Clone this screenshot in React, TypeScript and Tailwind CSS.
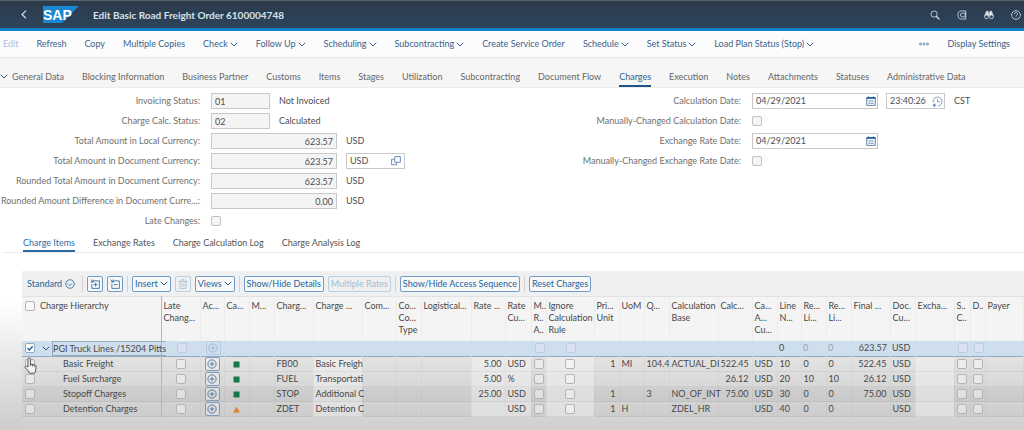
import React, { ReactNode } from "react";

const actions = [
    { label: "Refresh" },
    { label: "Copy" },
    { label: "Multiple Copies" },
    { label: "Check", menu: true },
    { label: "Follow Up", menu: true },
    { label: "Scheduling", menu: true },
    { label: "Subcontracting", menu: true },
    { label: "Create Service Order" },
    { label: "Schedule", menu: true },
    { label: "Set Status", menu: true },
    { label: "Load Plan Status (Stop)", menu: true },
];

const sections = [
    "General Data",
    "Blocking Information",
    "Business Partner",
    "Customs",
    "Items",
    "Stages",
    "Utilization",
    "Subcontracting",
    "Document Flow",
    "Charges",
    "Execution",
    "Notes",
    "Attachments",
    "Statuses",
    "Administrative Data",
];

const amounts = [
    { id: "local", label: "Total Amount in Local Currency:", value: "623.57" },
    { id: "doc", label: "Total Amount in Document Currency:", value: "623.57", editable: true },
    { id: "rounded", label: "Rounded Total Amount in Document Currency:", value: "623.57" },
    { id: "diff", label: "Rounded Amount Difference in Document Curre...:", value: "0.00" },
];

type Kind = "text" | "num" | "check" | "add" | "state";

type Column = {
    key: string;
    head: string[];
    width: string;
    kind?: Kind;
    edit?: boolean;
};

const columns: Column[] = [
    { key: "late", head: ["Late", "Chang..."], width: "w-[39px]", kind: "check" },
    { key: "action", head: ["Ac..."], width: "w-[24px]", kind: "add" },
    { key: "state", head: ["Ca..."], width: "w-[25px]", kind: "state" },
    { key: "m", head: ["M..."], width: "w-[25px]" },
    { key: "type", head: ["Charg..."], width: "w-[39px]" },
    { key: "desc", head: ["Charge ..."], width: "w-[49px]", edit: true },
    { key: "com", head: ["Com..."], width: "w-[34px]" },
    { key: "coType", head: ["Co...", "Co...", "Type"], width: "w-[25px]" },
    { key: "logistical", head: ["Logistical..."], width: "w-[50px]" },
    { key: "rate", head: ["Rate ..."], width: "w-[34px]", kind: "num", edit: true },
    { key: "rateCur", head: ["Rate", "Cu..."], width: "w-[26px]", edit: true },
    { key: "manual", head: ["M..", "R..", "A.."], width: "w-[15px]", kind: "check" },
    { key: "ignore", head: ["Ignore", "Calculation", "Rule"], width: "w-[48px]", kind: "check", edit: true },
    { key: "price", head: ["Pri...", "Unit"], width: "w-[25px]", kind: "num" },
    { key: "uom", head: ["UoM"], width: "w-[25px]" },
    { key: "qty", head: ["Q..."], width: "w-[25px]" },
    { key: "base", head: ["Calculation", "Base"], width: "w-[49px]" },
    { key: "calc", head: ["Calc..."], width: "w-[34px]", kind: "num" },
    { key: "calcCur", head: ["Ca...", "A...", "Cu..."], width: "w-[25px]" },
    { key: "line", head: ["Line", "N..."], width: "w-[24px]" },
    { key: "ref1", head: ["Re...", "Li..."], width: "w-[25px]" },
    { key: "ref2", head: ["Re...", "Li..."], width: "w-[25px]" },
    { key: "final", head: ["Final ..."], width: "w-[39px]", kind: "num" },
    { key: "docCur", head: ["Doc.", "Cu..."], width: "w-[25px]" },
    { key: "exch", head: ["Excha..."], width: "w-[39px]", edit: true },
    { key: "sc", head: ["S..", "C.."], width: "w-[16px]", kind: "check" },
    { key: "d", head: ["D.."], width: "w-[15px]", kind: "check" },
    { key: "payer", head: ["Payer"], width: "" },
];

type Row = { name: string; [key: string]: string };

const rows: Row[] = [
    { name: "Basic Freight", state: "ok", type: "FB00", desc: "Basic Freigh", rate: "5.00", rateCur: "USD", price: "1", uom: "MI", qty: "104.4", base: "ACTUAL_DI", calc: "522.45", calcCur: "USD", line: "10", ref1: "0", ref2: "0", final: "522.45", docCur: "USD" },
    { name: "Fuel Surcharge", state: "ok", type: "FUEL", desc: "Transportati", rate: "5.00", rateCur: "%", calc: "26.12", calcCur: "USD", line: "20", ref1: "10", ref2: "10", final: "26.12", docCur: "USD" },
    { name: "Stopoff Charges", state: "ok", type: "STOP", desc: "Additional C", rate: "25.00", rateCur: "USD", price: "1", qty: "3", base: "NO_OF_INT", calc: "75.00", calcCur: "USD", line: "30", ref1: "0", ref2: "0", final: "75.00", docCur: "USD" },
    { name: "Detention Charges", state: "warn", type: "ZDET", desc: "Detention C", rateCur: "USD", price: "1", uom: "H", base: "ZDEL_HR", calcCur: "USD", line: "40", ref1: "0", ref2: "0", docCur: "USD" },
];

function Icon({ size = "size-[10px]", children }: { size?: string; children: ReactNode }) {
    return (
        <svg className={`${size} shrink-0`} viewBox="0 0 16 16" fill="none" stroke="currentColor" strokeWidth="1.3" aria-hidden="true">
            {children}
        </svg>
    );
}

function Chevron() {
    return (
        <svg className="w-2 h-[5px] shrink-0" viewBox="0 0 8 5" fill="none" stroke="currentColor" aria-hidden="true">
            <path d="M0.7 0.7 4 4 7.3 0.7" />
        </svg>
    );
}

function CalendarIcon() {
    return (
        <Icon>
            <path d="M1.2 2.5h13.6v12.5H1.2z" />
            <path d="M1 3.2h14" strokeWidth="3" />
            <path d="M4 0.5v3M12 0.5v3" strokeWidth="1.5" />
            <path d="M4 8h2M7 8h2M10 8h2M4 11.5h2M7 11.5h2M10 11.5h2" strokeWidth="1.8" />
        </Icon>
    );
}

function Check({ label, id, checked, faint }: { label?: string; id?: string; checked?: boolean; faint?: boolean }) {
    return (
        <span className="relative inline-flex size-[10px] align-middle">
            <input
                id={id}
                type="checkbox"
                aria-label={label}
                defaultChecked={checked}
                className={`appearance-none size-[10px] rounded-[2px] border ${checked ? "border-[#8fa9c4] bg-white" : faint ? "border-[#bfcbe0] bg-[#d8e1f2]" : id ? "border-[#c0c0c0] bg-[#f4f4f4]" : "border-[#b4b4b4] bg-white/40"}`}
            />
            {checked && (
                <svg className="absolute inset-0 size-[10px] text-[#1f5a94] pointer-events-none" viewBox="0 0 10 10" fill="none" stroke="currentColor" strokeWidth="1.4" aria-hidden="true">
                    <path d="M2.5 5.2 4.3 7 7.7 3.2" />
                </svg>
            )}
        </span>
    );
}

function AddButton({ faint }: { faint?: boolean }) {
    return (
        <button
            type="button"
            aria-label="Add"
            className={`flex items-center justify-center w-[15px] h-[14px] rounded-[2px] border ${faint ? "border-[#b4cbe0] text-[#8fb0cf]" : "border-[#7d9dbb] text-[#3c6993] bg-white/30"}`}
        >
            <Icon>
                <circle cx="8" cy="8" r="6.6" />
                <path d="M8 4.5v7M4.5 8h7" />
            </Icon>
        </button>
    );
}

function ToolButton({ children, label, disabled }: { children: ReactNode; label?: string; disabled?: boolean }) {
    return (
        <button
            type="button"
            aria-label={label}
            disabled={disabled}
            className={`flex items-center justify-center gap-[2px] h-4 px-[2px] rounded-[2px] border whitespace-nowrap ${disabled ? "border-[#b9cfe2] text-[#a3bcd3]" : "border-[#6f9cc8] text-[#22639f] bg-white/50"}`}
        >
            {children}
        </button>
    );
}

function Separator() {
    return <span className="w-px h-4 bg-[#d2d2d2]" />;
}

function Header() {
    return (
        <header className="flex items-center h-[31px] border-t border-t-[#59636b] border-b-[3px] border-b-[#0f82c8] bg-linear-to-b from-[#2b3b4b] to-[#2d435b] pl-[20px] pr-[3px] text-[#d9e1e8]">
            <button type="button" aria-label="Back" className="w-[23px]">
                <svg className="w-[8px] h-[9px]" viewBox="0 0 8 9" fill="none" stroke="currentColor" strokeWidth="1.2" aria-hidden="true">
                    <path d="M6 0.6 2 4.5 6 8.4" />
                </svg>
            </button>
            <svg className="w-9 h-[17px]" viewBox="0 0 36 17" role="img" aria-label="SAP">
                <path d="M0 0h36L19 17H0z" fill="#1a86cf" />
                <text x="0" y="14" fontFamily="Liberation Sans, sans-serif" fontSize="14" fontWeight="700" fill="#fff">SAP</text>
            </svg>
            <h1 className="ml-[14px] text-[10px] font-bold whitespace-nowrap">Edit Basic Road Freight Order 6100004748</h1>
            <div className="flex items-center gap-[17px] ml-auto">
                <button type="button" aria-label="Search">
                    <Icon>
                        <circle cx="6.5" cy="6.5" r="5" />
                        <path d="m10 10 5 5" strokeWidth="2.2" />
                    </Icon>
                </button>
                <button type="button" aria-label="Copilot">
                    <Icon>
                        <path d="M14 1.5H7A5.5 6.5 0 0 0 7 14.5H14M14 1.5v13" />
                        <path d="M13 5H8.5a3 3 0 0 0 0 6H13z" />
                    </Icon>
                </button>
                <button type="button" aria-label="Find">
                    <Icon>
                        <path d="M4 2h2.5v3h3V2H12l3 8H9.5V8h-3v2H1z" fill="currentColor" />
                        <circle cx="4" cy="11" r="3" fill="#2d4055" />
                        <circle cx="12" cy="11" r="3" fill="#2d4055" />
                    </Icon>
                </button>
                <button type="button" aria-label="Help">
                    <Icon>
                        <circle cx="8" cy="8" r="7" />
                        <path d="M5.7 6.2a2.3 2.3 0 1 1 3.5 2c-.8.5-1.2.9-1.2 1.7M8 11v1.5" />
                    </Icon>
                </button>
            </div>
        </header>
    );
}

function Form() {
    return (
        <form className="flex pt-[3px] text-[#4d4d4d]">
            <div className="w-[570px]">
                <div className="flex items-center h-5">
                    <label htmlFor="invoicing" className="w-[200px] mr-[11px] text-right text-[#707070]">Invoicing Status:</label>
                    <input id="invoicing" readOnly defaultValue="01" className="w-[59px] h-4 px-[3px] border border-[#c8c8c8] bg-[#f4f4f4]" />
                    <span className="ml-[9px]">Not Invoiced</span>
                </div>
                <div className="flex items-center h-5">
                    <label htmlFor="calcStatus" className="w-[200px] mr-[11px] text-right text-[#707070]">Charge Calc. Status:</label>
                    <input id="calcStatus" readOnly defaultValue="02" className="w-[59px] h-4 px-[3px] border border-[#c8c8c8] bg-[#f4f4f4]" />
                    <span className="ml-[9px]">Calculated</span>
                </div>
                {amounts.map((a) => (
                    <div key={a.id} className="flex items-center h-5">
                        <label htmlFor={a.id} className="w-[200px] mr-[11px] text-right whitespace-nowrap text-[#707070]">{a.label}</label>
                        <input id={a.id} readOnly defaultValue={a.value} className="w-[126px] h-4 px-[3px] border border-[#c8c8c8] bg-[#f4f4f4] text-right" />
                        {a.editable ? (
                            <span className="flex items-center w-[59px] h-4 ml-[9px] px-[3px] border border-[#c8c8c8] bg-white">
                                <input aria-label="Currency" defaultValue="USD" className="w-full min-w-0" />
                                <span className="text-[#4a78a6]">
                                    <Icon>
                                        <path d="M6 1h9v9H6zM6 5H1v9h8v-4" />
                                    </Icon>
                                </span>
                            </span>
                        ) : (
                            <span className="ml-[9px]">USD</span>
                        )}
                    </div>
                ))}
                <div className="flex items-center h-5">
                    <label htmlFor="lateChanges" className="w-[200px] mr-[11px] text-right text-[#707070]">Late Changes:</label>
                    <Check id="lateChanges" />
                </div>
            </div>
            <div className="flex-1">
                <div className="flex items-center h-5">
                    <label htmlFor="calcDate" className="w-[171px] mr-[11px] text-right text-[#707070]">Calculation Date:</label>
                    <span className="flex items-center w-[126px] h-4 pl-[3px] pr-px border border-[#c8c8c8]">
                        <input id="calcDate" defaultValue="04/29/2021" className="w-full min-w-0" />
                        <span className="text-[#2f669c]"><CalendarIcon /></span>
                    </span>
                    <span className="flex items-center w-[59px] h-4 ml-2 pl-[3px] pr-px border border-[#c8c8c8]">
                        <input aria-label="Calculation time" defaultValue="23:40:26" className="w-full min-w-0" />
                        <span className="text-[#6f93bb]">
                            <Icon size="size-[11px]">
                                <path d="M1.7 9.5A6.5 6.5 0 1 1 9 14.5M8 4.5V8.5h3.5" />
                                <path d="M1 13.3h5M3.5 11v5" strokeWidth="2" />
                            </Icon>
                        </span>
                    </span>
                    <span className="ml-[9px]">CST</span>
                </div>
                <div className="flex items-center h-5">
                    <label htmlFor="manualCalc" className="w-[171px] mr-[11px] text-right text-[#707070]">Manually-Changed Calculation Date:</label>
                    <Check id="manualCalc" />
                </div>
                <div className="flex items-center h-5">
                    <label htmlFor="rateDate" className="w-[171px] mr-[11px] text-right text-[#707070]">Exchange Rate Date:</label>
                    <span className="flex items-center w-[126px] h-4 pl-[3px] pr-px border border-[#c8c8c8]">
                        <input id="rateDate" defaultValue="04/29/2021" className="w-full min-w-0" />
                        <span className="text-[#2f669c]"><CalendarIcon /></span>
                    </span>
                </div>
                <div className="flex items-center h-5">
                    <label htmlFor="manualRate" className="w-[171px] mr-[11px] text-right text-[#707070]">Manually-Changed Exchange Rate Date:</label>
                    <Check id="manualRate" />
                </div>
            </div>
        </form>
    );
}

function Cell({ column, row }: { column: Column; row: Row }) {
    const value = row[column.key];
    const fill = column.edit ? "bg-white/35" : "";
    if (column.kind === "check") {
        return <td className={`${fill} border-r border-black/3`}><div className="flex justify-center"><Check label={column.head.join(" ")} /></div></td>;
    }
    if (column.kind === "add") {
        return <td className="border-r border-black/3"><div className="flex justify-center"><AddButton /></div></td>;
    }
    if (column.kind === "state") {
        return (
            <td className="border-r border-black/3">
                <svg className="size-[7px] mx-auto" viewBox="0 0 7 7" aria-hidden="true">
                    {value === "ok" ? <path d="M0.5 0.5h6v6h-6z" fill="#16774a" /> : <path d="M3.5 0.5 6.8 6.5H0.2z" fill="#d9822b" />}
                </svg>
            </td>
        );
    }
    return (
        <td className={`${fill} pl-[2px] whitespace-nowrap border-r border-black/3 ${column.kind === "num" ? "pr-[3px] text-right" : ""}`}>{value}</td>
    );
}

function ChargeTable() {
    return (
        <table className="table-fixed w-full border-collapse text-[#484848]">
            <colgroup>
                <col className="w-[15px]" />
                <col className="w-[124px]" />
                {columns.map((c) => <col key={c.key} className={c.width} />)}
            </colgroup>
            <thead>
                <tr className="h-[44px] border-t border-[#e2e2e2] bg-white/30 align-top text-left leading-3">
                    <th className="pt-[4px] pl-[3px]"><div className="flex"><Check label="Select all" /></div></th>
                    <th className="pt-[3px] pl-[3px] font-normal border-r border-[#b5b5b5]">Charge Hierarchy</th>
                    {columns.map((c) => (
                        <th key={c.key} className="pt-[3px] pl-[2px] font-normal whitespace-nowrap border-r border-black/3">
                            {c.head.map((line, i) => <div key={i}>{line}</div>)}
                        </th>
                    ))}
                </tr>
            </thead>
            <tbody>
                <tr className="h-4 bg-[#cfdeed] border-b border-[#8fabc7]">
                    <td className="pl-[3px]">
                        <div className="relative flex">
                            <Check label="Select PGI Truck Lines" checked />
                            <svg className="absolute top-[14px] -left-[1px] z-10 w-[13px] h-[17px] pointer-events-none" viewBox="0 0 13 17" fill="#f4f4f4" stroke="#555" strokeWidth="1" strokeLinejoin="round" aria-hidden="true">
                                <path d="M4 10V2.2a1.2 1.2 0 0 1 2.4 0V7l4 .8c1.3.3 1.8 1 1.7 2.2L11.5 14l-.8 2.2H5.5L4.5 14 1 10.5c-.6-.9.6-1.7 1.4-1.2z" />
                                <path d="M6.4 7v2M8.4 7.6v1.8M10.4 8v1.6" fill="none" />
                            </svg>
                        </div>
                    </td>
                    <td className="border-r border-[#b5b5b5]">
                        <div className="flex items-center gap-[2px] pl-[5px] whitespace-nowrap">
                            <span className="text-[#27598a]"><Chevron /></span>
                            <span className="flex-1 leading-[13px] border border-r-0 border-[#9aa9b8]">PGI Truck Lines /15204 Pitts</span>
                        </div>
                    </td>
                    {columns.map((c) => (
                        <td key={c.key} className={`pl-[2px] ${c.kind === "num" ? "pr-[3px] text-right" : ""}`}>
                            {c.kind === "check" && <div className="flex justify-center"><Check label={c.head.join(" ")} faint /></div>}
                            {c.kind === "add" && <div className="flex justify-center"><AddButton faint /></div>}
                            {c.key === "line" && "0"}
                            {(c.key === "ref1" || c.key === "ref2") && <span className="text-[#93a3b5]">0</span>}
                            {c.key === "final" && "623.57"}
                            {c.key === "docCur" && "USD"}
                        </td>
                    ))}
                </tr>
                {rows.map((row) => (
                    <tr key={row.name} className={`h-[15px] border-b border-black/5 ${row.type === "STOP" ? "bg-black/7" : "bg-black/3"}`}>
                        <td className="pl-[3px]"><div className="flex"><Check label={`Select ${row.name}`} /></div></td>
                        <td className="pl-[26px] whitespace-nowrap border-r border-[#b5b5b5]">{row.name}</td>
                        {columns.map((c) => <Cell key={c.key} column={c} row={row} />)}
                    </tr>
                ))}
            </tbody>
        </table>
    );
}

export default function App() {
    return (
        <div className="flex flex-col min-h-screen overflow-hidden bg-linear-to-b from-white from-70% to-[#cdcdcd] font-[Lato,sans-serif] text-[9px] leading-3">
            <Header />
            <nav className="flex items-center gap-[18px] h-[27px] pl-[3px] pr-[14px] bg-[#fcfcfc] border-b border-[#e6e6e6] text-[#38628f] whitespace-nowrap">
                <button type="button" disabled className="text-[#adbfd4]">Edit</button>
                {actions.map((a) => (
                    <button key={a.label} type="button" className="flex items-center gap-[2px]">
                        {a.label}
                        {a.menu && <Chevron />}
                    </button>
                ))}
                <button type="button" aria-label="More" className="ml-auto">
                    <svg className="w-[10px] h-[4px]" viewBox="0 0 10 4" fill="none" stroke="currentColor" strokeWidth="0.7" aria-hidden="true">
                        <circle cx="1.5" cy="2" r="1" />
                        <circle cx="5" cy="2" r="1" />
                        <circle cx="8.5" cy="2" r="1" />
                    </svg>
                </button>
                <button type="button">Display Settings</button>
            </nav>
            <nav className="flex items-end h-[30px] bg-[#f6f6f6] border-b border-[#ececec] text-[#666] whitespace-nowrap">
                <span className="pb-2 mr-1 text-[#27598a]"><Chevron /></span>
                <div className="flex gap-[18px]">
                    {sections.map((s) => (
                        <a key={s} href="#" className={s === "Charges" ? "pb-[2px] border-b-2 border-[#20558a] text-[#2b5f94]" : "pb-[2px] border-b-2 border-transparent"}>{s}</a>
                    ))}
                </div>
            </nav>
            <Form />
            <nav className="flex items-end gap-[18px] h-[22px] ml-[3px] pl-5 border-b border-[#ececec] text-[#555] whitespace-nowrap">
                <a href="#" className="pb-px border-b-2 border-[#2d6ca8] text-[#2d6ca8]">Charge Items</a>
                <a href="#" className="pb-px border-b-2 border-transparent">Exchange Rates</a>
                <a href="#" className="pb-px border-b-2 border-transparent">Charge Calculation Log</a>
                <a href="#" className="pb-px border-b-2 border-transparent">Charge Analysis Log</a>
            </nav>
            <section className="flex-1 ml-[22px] mt-[18px] bg-linear-to-b from-[#f0f0f0] from-45% to-[#cfcfcf]">
                <div className="flex items-center gap-1 h-[25px] pl-[5px] text-[#22639f]">
                    <button type="button" className="flex items-center gap-[3px] mr-[3px]">
                        Standard
                        <Icon>
                            <circle cx="8" cy="8" r="6.8" />
                            <path d="m4.5 7 3.5 3.5L11.5 7" />
                        </Icon>
                    </button>
                    <Separator />
                    <ToolButton label="Expand">
                        <Icon>
                            <path d="M5 3h10v12H3V8M1 1l4 4M5 1v4H1M9 6v6M6 9h6" />
                        </Icon>
                    </ToolButton>
                    <ToolButton label="Collapse">
                        <Icon>
                            <path d="M5 3h10v12H3V8M1 1l4 4M5 1v4H1M6 9h6" />
                        </Icon>
                    </ToolButton>
                    <Separator />
                    <ToolButton>Insert <Chevron /></ToolButton>
                    <ToolButton label="Delete" disabled>
                        <Icon>
                            <path d="M3 4h10v11H3zM1 3.5h14M6 1h4M6.5 6.5v6M9.5 6.5v6" />
                        </Icon>
                    </ToolButton>
                    <ToolButton>Views <Chevron /></ToolButton>
                    <Separator />
                    <ToolButton>Show/Hide Details</ToolButton>
                    <ToolButton disabled>Multiple Rates</ToolButton>
                    <Separator />
                    <ToolButton>Show/Hide Access Sequence</ToolButton>
                    <Separator />
                    <ToolButton>Reset Charges</ToolButton>
                </div>
                <ChargeTable />
            </section>
        </div>
    );
}
